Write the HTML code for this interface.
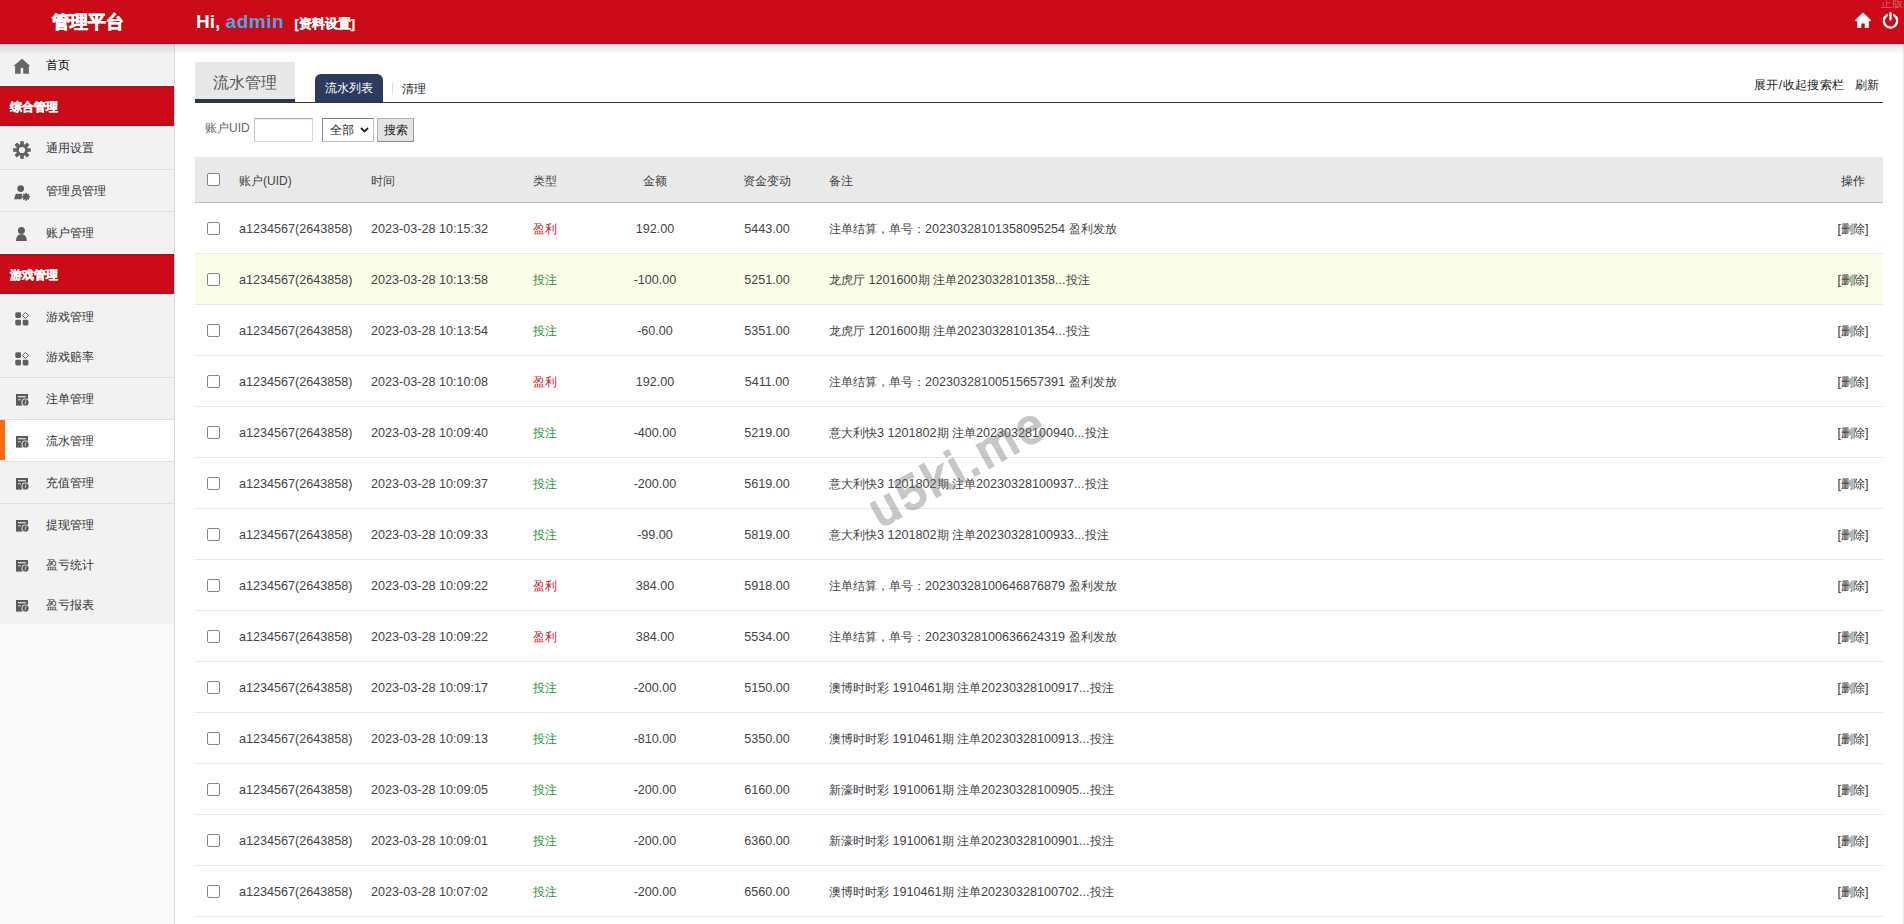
<!DOCTYPE html>
<html><head><meta charset="utf-8">
<style>
*{margin:0;padding:0;box-sizing:border-box}
html,body{width:1904px;height:924px;overflow:hidden;background:#fff;font-family:"Liberation Sans",sans-serif;color:#333}
#hd{position:absolute;left:0;top:0;width:1904px;height:44px;background:#cb0a17;border-bottom:1px solid #ad0c1b;z-index:5}
#shd{position:absolute;left:0;top:44px;width:1904px;height:11px;background:linear-gradient(rgba(50,70,85,.18),rgba(50,70,85,.09) 35%,rgba(50,70,85,0));z-index:4}
#hd .logo{position:absolute;left:52px;top:10px;font-size:18px;font-weight:bold;color:#fff;-webkit-text-stroke:.7px #fff;line-height:24px;white-space:nowrap}
#hd .hi{position:absolute;left:196px;top:8.7px;font-size:19px;font-weight:bold;color:#fff;line-height:26px;white-space:nowrap}
#hd .hi b{color:#4ea6e2;letter-spacing:.5px}
#hd .hi span{font-size:13px;margin-left:10.5px;-webkit-text-stroke:.25px #fff}
#hd .ver{position:absolute;left:1881px;top:-4px;font-size:11px;line-height:14px;color:rgba(255,200,200,.45)}
#hd .ih{position:absolute;left:1854px;top:11px}
#hd .ip{position:absolute;left:1882px;top:12px}
#sb{position:absolute;left:0;top:44px;width:175px;height:880px;background:#f9f9f9;border-right:1px solid #d5dae3}
.it{position:absolute;left:0;width:174px;background:#f2f2f2;font-size:12px;color:#333}
.it.home{color:#000}
.it.act{background:#fff}
.it.act:before{content:"";position:absolute;left:0;top:0;width:5px;height:40px;background:#f96a0a}
.it .tx{position:absolute;left:46px;top:0}
.it .ic{position:absolute;line-height:0}
.grp{position:absolute;left:0;width:174px;height:40px;background:#cb0a17;border-top:1px solid #b00c19;border-bottom:1px solid #b00c19;color:#fff;font-weight:bold;-webkit-text-stroke:.3px #fff;font-size:12px;line-height:40px;padding-left:10px}
.sep{position:absolute;left:0;width:174px;height:1px}
.tab0{position:absolute;left:195px;top:62px;width:100px;height:41px;background:#e8e8e8;border-bottom:4px solid #2c3850;font-size:16px;color:#555;line-height:41px;text-align:center}
.tab1{position:absolute;left:315px;top:74px;width:68px;height:29px;background:#2d3a5e;border-radius:6px 6px 0 0;color:#fff;font-size:12px;line-height:29px;text-align:center}
.vsep{position:absolute;left:392px;top:83px;width:1px;height:12px;background:#ddd}
.tab2{position:absolute;left:402px;top:81px;font-size:12px;line-height:16px;color:#222}
.hline{position:absolute;left:195px;top:102px;width:1688px;height:1px;background:#333}
.tools{position:absolute;left:1754px;letter-spacing:.4px;top:77px;font-size:12px;line-height:16px;color:#222;white-space:nowrap}
.lbl{position:absolute;left:205px;top:120px;font-size:12px;line-height:16px;color:#666}
.inp{position:absolute;left:254px;top:118px;width:59px;height:24px;border:1px solid #d6d6d6;border-top-color:#b0b0b0;border-left-color:#c4c4c4;background:#fff;box-shadow:inset 0 1px 1px rgba(0,0,0,.08)}
.sel{position:absolute;left:322px;top:118px;width:52px;height:24px;border:1px solid #c0c0c0;border-top-color:#7a7a7a;border-left-color:#8a8a8a;background:#fff;font-size:12px;line-height:22px;padding-left:7px;color:#222}
.sel svg{position:absolute;left:37px;top:8px}
.btn{position:absolute;left:377px;top:118px;width:37px;height:24px;border:1px solid #b4b4b4;border-bottom-color:#8c8c8c;border-right-color:#9a9a9a;background:#e4e4e4;font-size:12px;line-height:22px;text-align:center;color:#222}
.th{position:absolute;left:195px;top:157px;width:1688px;height:46px;background:#e9e9e9;border-bottom:1px solid #bdbdbd}
.tr{position:absolute;left:195px;width:1688px;height:51px;border-bottom:1px solid #e8e8e8;background:#fff}
.tr.hl{background:#fafde8}
.th span,.tr span{position:absolute;white-space:nowrap;font-size:12.6px;line-height:16px;color:#444}
.th span{top:16px;font-size:12px;color:#444}
.tr span{top:18px}
.tr i{font-style:normal;font-size:12px}
.cb{left:12px;top:19px!important;width:13px;height:13px;border:1px solid #858585;border-radius:2px;background:#fff}
.th .cb{top:16px!important}
.c1{left:44px} .c2{left:176px} .c3{left:338px}
.c4{left:420px;width:80px;text-align:center}
.c5{left:532px;width:80px;text-align:center}
.c6{left:634px}
.c7{left:1628px;width:60px;text-align:center;color:#333!important}
.red{color:#cc1b24!important} .grn{color:#2c9440!important}
.wm{position:absolute;left:860.9px;top:492.9px;font-size:48px;letter-spacing:4px;color:#6e6e6e;-webkit-text-stroke:2.4px #6e6e6e;opacity:.38;transform:rotate(-29deg);transform-origin:0 0;white-space:nowrap;line-height:1}
</style></head><body>
<div id="hd">
  <div class="logo">管理平台</div>
  <div class="hi">Hi, <b>admin</b><span>[资料设置]</span></div>
  <div class="ver">正版</div>
  <svg class="ih" width="18" height="18" viewBox="0 0 18 18"><path d="M9 1.5 L0.8 9.2 L2.3 10.6 L3.2 9.8 L3.2 17 L7.3 17 L7.3 12.5 L10.7 12.5 L10.7 17 L14.8 17 L14.8 9.8 L15.7 10.6 L17.2 9.2 Z" fill="#fff"/></svg>
  <svg class="ip" width="17" height="17" viewBox="0 0 17 17"><path d="M5 3.2 A6.7 6.7 0 1 0 12 3.2" fill="none" stroke="#fff" stroke-width="2.3" stroke-linecap="round"/><line x1="8.5" y1="1.2" x2="8.5" y2="7.5" stroke="#fff" stroke-width="2.3" stroke-linecap="round"/></svg>
</div>
<div id="shd"></div>
<div id="sb"></div>
<div style="position:absolute;left:1903px;top:44px;width:1px;height:880px;background:#ececec"></div>
<div class="it home" style="top:44px;height:38px;line-height:38px"><span class="ic" style="left:13px;top:14px"><svg width="18" height="16" viewBox="0 0 18 16"><path d="M9.1 0.7 L0.5 8 L2.1 8 L2.1 15.7 L7.7 15.7 L7.7 10.3 Q8.95 9.2 10.2 10.3 L10.2 15.7 L15.9 15.7 L15.9 8 L17.2 8 Z" fill="#666"/></svg></span><span class="tx" style="top:1.5px">首页</span></div><div class="sep" style="top:82px;height:4px;background:linear-gradient(#e9eef5,#f6f8fc)"></div><div class="grp" style="top:86px">综合管理</div><div class="it" style="top:126px;height:43px;line-height:43px"><span class="ic" style="left:13px;top:15px"><svg width="18" height="18" viewBox="0 0 18 18"><g fill="#626262"><circle cx="9" cy="9" r="6"/><rect x="7.2" y="0.2" width="3.6" height="17.6"/><rect x="7.2" y="0.2" width="3.6" height="17.6" transform="rotate(45 9 9)"/><rect x="7.2" y="0.2" width="3.6" height="17.6" transform="rotate(90 9 9)"/><rect x="7.2" y="0.2" width="3.6" height="17.6" transform="rotate(135 9 9)"/></g><circle cx="9" cy="9" r="3.1" fill="#f2f2f2"/></svg></span><span class="tx" style="top:1px">通用设置</span></div><div class="sep" style="top:169px;background:#e0e0e0"></div><div class="it" style="top:170px;height:41px;line-height:41px"><span class="ic" style="left:13px;top:14px"><svg width="18" height="17" viewBox="0 0 18 17"><g fill="#5e5e5e"><circle cx="7.7" cy="4.6" r="3.4"/><path d="M1 15.2 L2.6 10.3 Q3 9.8 3.6 9.8 L9.2 9.8 L8.6 15.2 Z"/><g transform="translate(13 12.8)"><circle r="2.8"/><rect x="-0.8" y="-3.9" width="1.6" height="7.8"/><rect x="-0.8" y="-3.9" width="1.6" height="7.8" transform="rotate(45)"/><rect x="-0.8" y="-3.9" width="1.6" height="7.8" transform="rotate(90)"/><rect x="-0.8" y="-3.9" width="1.6" height="7.8" transform="rotate(135)"/></g></g></svg></span><span class="tx" style="top:0.5px">管理员管理</span></div><div class="sep" style="top:211px;background:#e0e0e0"></div><div class="it" style="top:212px;height:42px;line-height:42px"><span class="ic" style="left:14px;top:13px"><svg width="14" height="17" viewBox="0 0 14 17"><g fill="#5e5e5e"><circle cx="7.4" cy="5.4" r="3.5"/><path d="M2 16 C2 11.2 4.5 9.3 7.4 9.3 C10.3 9.3 12.8 11.2 12.8 16 Z"/></g></svg></span><span class="tx" style="top:0px">账户管理</span></div><div class="grp" style="top:254px">游戏管理</div><div class="it" style="top:294px;height:42px;line-height:42px"><span class="ic" style="left:15px;top:17.7px"><svg width="15" height="15" viewBox="0 0 15 15"><g fill="#5e5e5e"><rect x="0.3" y="0.3" width="5.7" height="5.7" rx="1.4"/><rect x="0.3" y="7.7" width="5.7" height="5.7" rx="1.4"/><rect x="7.7" y="7.7" width="5.7" height="5.7" rx="1.4"/></g><path d="M10.5 0.4 L13.6 3.4 L10.5 6.5 L7.4 3.4 Z" fill="none" stroke="#5e5e5e" stroke-width="1" stroke-linejoin="round"/></svg></span><span class="tx" style="top:1.5px">游戏管理</span></div><div class="it" style="top:336px;height:41px;line-height:41px"><span class="ic" style="left:15px;top:15.5px"><svg width="15" height="15" viewBox="0 0 15 15"><g fill="#5e5e5e"><rect x="0.3" y="0.3" width="5.7" height="5.7" rx="1.4"/><rect x="0.3" y="7.7" width="5.7" height="5.7" rx="1.4"/><rect x="7.7" y="7.7" width="5.7" height="5.7" rx="1.4"/></g><path d="M10.5 0.4 L13.6 3.4 L10.5 6.5 L7.4 3.4 Z" fill="none" stroke="#5e5e5e" stroke-width="1" stroke-linejoin="round"/></svg></span><span class="tx" style="top:1px">游戏赔率</span></div><div class="sep" style="top:377px;background:#e0e0e0"></div><div class="it" style="top:378px;height:41px;line-height:41px"><span class="ic" style="left:16px;top:16px"><svg width="15" height="13" viewBox="0 0 15 13"><rect x="0" y="0" width="12" height="11.6" fill="#5a5a5a"/><rect x="2" y="2.1" width="7.8" height="1.2" fill="#e8e8e8"/><rect x="2" y="5.2" width="3" height="1.1" fill="#c8c8c8"/><circle cx="9.5" cy="8.4" r="4" fill="#f2f2f2"/><circle cx="9.5" cy="8.4" r="3.1" fill="#5a5a5a"/><path d="M9.9 6.4 L9.1 10.2" stroke="#d8d8d8" stroke-width="0.9"/></svg></span><span class="tx" style="top:1px">注单管理</span></div><div class="sep" style="top:419px;background:#e0e0e0"></div><div class="it act" style="top:420px;height:41px;line-height:41px"><span class="ic" style="left:16px;top:15.7px"><svg width="15" height="13" viewBox="0 0 15 13"><rect x="0" y="0" width="12" height="11.6" fill="#5a5a5a"/><rect x="2" y="2.1" width="7.8" height="1.2" fill="#e8e8e8"/><rect x="2" y="5.2" width="3" height="1.1" fill="#c8c8c8"/><circle cx="9.5" cy="8.4" r="4" fill="#f2f2f2"/><circle cx="9.5" cy="8.4" r="3.1" fill="#5a5a5a"/><path d="M9.9 6.4 L9.1 10.2" stroke="#d8d8d8" stroke-width="0.9"/></svg></span><span class="tx" style="top:0.5px">流水管理</span></div><div class="sep" style="top:461px;background:#e0e0e0"></div><div class="it" style="top:462px;height:41px;line-height:41px"><span class="ic" style="left:16px;top:16.3px"><svg width="15" height="13" viewBox="0 0 15 13"><rect x="0" y="0" width="12" height="11.6" fill="#5a5a5a"/><rect x="2" y="2.1" width="7.8" height="1.2" fill="#e8e8e8"/><rect x="2" y="5.2" width="3" height="1.1" fill="#c8c8c8"/><circle cx="9.5" cy="8.4" r="4" fill="#f2f2f2"/><circle cx="9.5" cy="8.4" r="3.1" fill="#5a5a5a"/><path d="M9.9 6.4 L9.1 10.2" stroke="#d8d8d8" stroke-width="0.9"/></svg></span><span class="tx" style="top:1px">充值管理</span></div><div class="sep" style="top:503px;background:#e0e0e0"></div><div class="it" style="top:504px;height:40px;line-height:40px"><span class="ic" style="left:16px;top:16.3px"><svg width="15" height="13" viewBox="0 0 15 13"><rect x="0" y="0" width="12" height="11.6" fill="#5a5a5a"/><rect x="2" y="2.1" width="7.8" height="1.2" fill="#e8e8e8"/><rect x="2" y="5.2" width="3" height="1.1" fill="#c8c8c8"/><circle cx="9.5" cy="8.4" r="4" fill="#f2f2f2"/><circle cx="9.5" cy="8.4" r="3.1" fill="#5a5a5a"/><path d="M9.9 6.4 L9.1 10.2" stroke="#d8d8d8" stroke-width="0.9"/></svg></span><span class="tx" style="top:1px">提现管理</span></div><div class="it" style="top:544px;height:40px;line-height:40px"><span class="ic" style="left:16px;top:16.3px"><svg width="15" height="13" viewBox="0 0 15 13"><rect x="0" y="0" width="12" height="11.6" fill="#5a5a5a"/><rect x="2" y="2.1" width="7.8" height="1.2" fill="#e8e8e8"/><rect x="2" y="5.2" width="3" height="1.1" fill="#c8c8c8"/><circle cx="9.5" cy="8.4" r="4" fill="#f2f2f2"/><circle cx="9.5" cy="8.4" r="3.1" fill="#5a5a5a"/><path d="M9.9 6.4 L9.1 10.2" stroke="#d8d8d8" stroke-width="0.9"/></svg></span><span class="tx" style="top:1px">盈亏统计</span></div><div class="it" style="top:584px;height:40px;line-height:40px"><span class="ic" style="left:16px;top:16.3px"><svg width="15" height="13" viewBox="0 0 15 13"><rect x="0" y="0" width="12" height="11.6" fill="#5a5a5a"/><rect x="2" y="2.1" width="7.8" height="1.2" fill="#e8e8e8"/><rect x="2" y="5.2" width="3" height="1.1" fill="#c8c8c8"/><circle cx="9.5" cy="8.4" r="4" fill="#f2f2f2"/><circle cx="9.5" cy="8.4" r="3.1" fill="#5a5a5a"/><path d="M9.9 6.4 L9.1 10.2" stroke="#d8d8d8" stroke-width="0.9"/></svg></span><span class="tx" style="top:1px">盈亏报表</span></div>
<div class="tab0">流水管理</div>
<div class="tab1">流水列表</div>
<div class="vsep"></div>
<div class="tab2">清理</div>
<div class="hline"></div>
<div class="tools">展开/收起搜索栏</div><div class="tools" style="left:1855px">刷新</div>
<div class="lbl">账户UID</div>
<div class="inp"></div>
<div class="sel">全部<svg width="9" height="6" viewBox="0 0 9 6"><path d="M1 1 L4.5 4.5 L8 1" fill="none" stroke="#222" stroke-width="1.8"/></svg></div>
<div class="btn">搜索</div>
<div class="th"><span class="cb" style="top:16px"></span><span class="c1">账户(UID)</span><span class="c2">时间</span><span class="c3">类型</span><span class="c4">金额</span><span class="c5">资金变动</span><span class="c6">备注</span><span class="c7">操作</span></div><div class="tr" style="top:203px"><span class="cb"></span><span class="c1">a1234567(2643858)</span><span class="c2">2023-03-28 10:15:32</span><span class="c3 red"><i>盈利</i></span><span class="c4">192.00</span><span class="c5">5443.00</span><span class="c6"><i>注单结算，单号：</i>20230328101358095254 <i>盈利发放</i></span><span class="c7">[<i>删除</i>]</span></div><div class="tr hl" style="top:254px"><span class="cb"></span><span class="c1">a1234567(2643858)</span><span class="c2">2023-03-28 10:13:58</span><span class="c3 grn"><i>投注</i></span><span class="c4">-100.00</span><span class="c5">5251.00</span><span class="c6"><i>龙虎厅</i> 1201600<i>期</i> <i>注单</i>20230328101358...<i>投注</i></span><span class="c7">[<i>删除</i>]</span></div><div class="tr" style="top:305px"><span class="cb"></span><span class="c1">a1234567(2643858)</span><span class="c2">2023-03-28 10:13:54</span><span class="c3 grn"><i>投注</i></span><span class="c4">-60.00</span><span class="c5">5351.00</span><span class="c6"><i>龙虎厅</i> 1201600<i>期</i> <i>注单</i>20230328101354...<i>投注</i></span><span class="c7">[<i>删除</i>]</span></div><div class="tr" style="top:356px"><span class="cb"></span><span class="c1">a1234567(2643858)</span><span class="c2">2023-03-28 10:10:08</span><span class="c3 red"><i>盈利</i></span><span class="c4">192.00</span><span class="c5">5411.00</span><span class="c6"><i>注单结算，单号：</i>20230328100515657391 <i>盈利发放</i></span><span class="c7">[<i>删除</i>]</span></div><div class="tr" style="top:407px"><span class="cb"></span><span class="c1">a1234567(2643858)</span><span class="c2">2023-03-28 10:09:40</span><span class="c3 grn"><i>投注</i></span><span class="c4">-400.00</span><span class="c5">5219.00</span><span class="c6"><i>意大利快</i>3 1201802<i>期</i> <i>注单</i>20230328100940...<i>投注</i></span><span class="c7">[<i>删除</i>]</span></div><div class="tr" style="top:458px"><span class="cb"></span><span class="c1">a1234567(2643858)</span><span class="c2">2023-03-28 10:09:37</span><span class="c3 grn"><i>投注</i></span><span class="c4">-200.00</span><span class="c5">5619.00</span><span class="c6"><i>意大利快</i>3 1201802<i>期</i> <i>注单</i>20230328100937...<i>投注</i></span><span class="c7">[<i>删除</i>]</span></div><div class="tr" style="top:509px"><span class="cb"></span><span class="c1">a1234567(2643858)</span><span class="c2">2023-03-28 10:09:33</span><span class="c3 grn"><i>投注</i></span><span class="c4">-99.00</span><span class="c5">5819.00</span><span class="c6"><i>意大利快</i>3 1201802<i>期</i> <i>注单</i>20230328100933...<i>投注</i></span><span class="c7">[<i>删除</i>]</span></div><div class="tr" style="top:560px"><span class="cb"></span><span class="c1">a1234567(2643858)</span><span class="c2">2023-03-28 10:09:22</span><span class="c3 red"><i>盈利</i></span><span class="c4">384.00</span><span class="c5">5918.00</span><span class="c6"><i>注单结算，单号：</i>20230328100646876879 <i>盈利发放</i></span><span class="c7">[<i>删除</i>]</span></div><div class="tr" style="top:611px"><span class="cb"></span><span class="c1">a1234567(2643858)</span><span class="c2">2023-03-28 10:09:22</span><span class="c3 red"><i>盈利</i></span><span class="c4">384.00</span><span class="c5">5534.00</span><span class="c6"><i>注单结算，单号：</i>20230328100636624319 <i>盈利发放</i></span><span class="c7">[<i>删除</i>]</span></div><div class="tr" style="top:662px"><span class="cb"></span><span class="c1">a1234567(2643858)</span><span class="c2">2023-03-28 10:09:17</span><span class="c3 grn"><i>投注</i></span><span class="c4">-200.00</span><span class="c5">5150.00</span><span class="c6"><i>澳博时时彩</i> 1910461<i>期</i> <i>注单</i>20230328100917...<i>投注</i></span><span class="c7">[<i>删除</i>]</span></div><div class="tr" style="top:713px"><span class="cb"></span><span class="c1">a1234567(2643858)</span><span class="c2">2023-03-28 10:09:13</span><span class="c3 grn"><i>投注</i></span><span class="c4">-810.00</span><span class="c5">5350.00</span><span class="c6"><i>澳博时时彩</i> 1910461<i>期</i> <i>注单</i>20230328100913...<i>投注</i></span><span class="c7">[<i>删除</i>]</span></div><div class="tr" style="top:764px"><span class="cb"></span><span class="c1">a1234567(2643858)</span><span class="c2">2023-03-28 10:09:05</span><span class="c3 grn"><i>投注</i></span><span class="c4">-200.00</span><span class="c5">6160.00</span><span class="c6"><i>新濠时时彩</i> 1910061<i>期</i> <i>注单</i>20230328100905...<i>投注</i></span><span class="c7">[<i>删除</i>]</span></div><div class="tr" style="top:815px"><span class="cb"></span><span class="c1">a1234567(2643858)</span><span class="c2">2023-03-28 10:09:01</span><span class="c3 grn"><i>投注</i></span><span class="c4">-200.00</span><span class="c5">6360.00</span><span class="c6"><i>新濠时时彩</i> 1910061<i>期</i> <i>注单</i>20230328100901...<i>投注</i></span><span class="c7">[<i>删除</i>]</span></div><div class="tr" style="top:866px"><span class="cb"></span><span class="c1">a1234567(2643858)</span><span class="c2">2023-03-28 10:07:02</span><span class="c3 grn"><i>投注</i></span><span class="c4">-200.00</span><span class="c5">6560.00</span><span class="c6"><i>澳博时时彩</i> 1910461<i>期</i> <i>注单</i>20230328100702...<i>投注</i></span><span class="c7">[<i>删除</i>]</span></div>
<div class="wm">u5ki.me</div>
</body></html>
